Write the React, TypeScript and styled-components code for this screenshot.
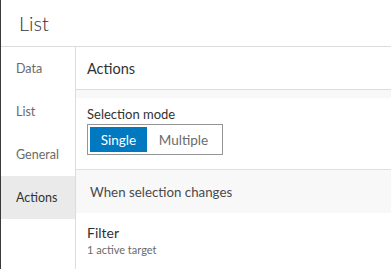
import React, { useState } from 'react';
import styled, { createGlobalStyle } from 'styled-components';

const Global = createGlobalStyle`
  html,body{margin:0;padding:0;background:#fff;}
  body{font-family:Lato,"Noto Sans",sans-serif;color:#323232;}
`;

/* ── Styles ── */
const Panel = styled.div`
  width:391px;height:269px;overflow:hidden;background:#fff;
  display:flex;flex-direction:column;border-left:1px solid #3a3a3a;box-sizing:border-box;
`;
const Header = styled.div`
  height:46px;flex:none;display:flex;align-items:center;padding-left:18px;
  border-bottom:1px solid #dcdcdc;font-size:20px;font-weight:300;color:#323232;
  box-sizing:content-box;
`;
const Body = styled.div`flex:1;display:flex;min-height:0;`;

const Side = styled.nav`width:74px;flex:none;border-right:1px solid #dcdcdc;display:flex;flex-direction:column;`;
const SideItem = styled.div<{ $active?: boolean }>`
  height:43px;display:flex;align-items:center;
  font-size:12.5px;color:${p => (p.$active ? '#323232' : '#6a6a6a')};
  background:${p => (p.$active ? '#eaeaea' : 'transparent')};
  margin-left:${p => (p.$active ? '-1px' : '0')};
  padding-left:${p => (p.$active ? '16px' : '15px')};
  cursor:pointer;
`;

const Main = styled.div`flex:1;display:flex;flex-direction:column;min-width:0;`;
const MainTitle = styled.div`
  height:42px;flex:none;display:flex;align-items:center;padding-left:11px;
  font-size:14.5px;color:#323232;border-bottom:1px solid #dcdcdc;
`;
const Gap = styled.div`height:8px;flex:none;background:#f8f8f8;`;

const Section = styled.div`
  padding:9px 11px 0;height:72px;box-sizing:border-box;flex:none;
  border-bottom:1px solid #e0e0e0;
`;
const FieldLabel = styled.div`font-size:13px;color:#323232;line-height:15px;margin-bottom:2px;`;

const Segmented = styled.div`
  display:inline-flex;border:1px solid #959595;padding:2px;
`;
const SegBtn = styled.button<{ $on?: boolean; $w: number }>`
  height:25px;width:${p => p.$w}px;border:none;padding:0;
  font-family:inherit;font-size:13.5px;cursor:pointer;
  background:${p => (p.$on ? '#0079c1' : '#fff')};
  color:${p => (p.$on ? '#fff' : '#6a6a6a')};
`;

const GroupBar = styled.div`
  height:43px;flex:none;background:#f8f8f8;display:flex;align-items:center;
  padding-left:14px;font-size:13.3px;color:#4a4a4a;
`;

const ActionRow = styled.div`padding:11px 11px;display:flex;flex-direction:column;gap:2px;`;
const ActionName = styled.div`font-size:14px;color:#323232;line-height:17px;`;
const ActionSub = styled.div`font-size:11px;color:#6a6a6a;line-height:14px;`;

const tabs = ['Data', 'List', 'General', 'Actions'];

const App: React.FC = () => {
  const [tab, setTab] = useState('Actions');
  const [mode, setMode] = useState<'single' | 'multiple'>('single');

  return (
    <Panel>
      <Global />
      <Header>List</Header>
      <Body>
        <Side>
          {tabs.map(t => (
            <SideItem key={t} $active={tab === t} onClick={() => setTab(t)}>{t}</SideItem>
          ))}
        </Side>
        <Main>
          <MainTitle>Actions</MainTitle>
          <Gap />
          <Section>
            <FieldLabel>Selection mode</FieldLabel>
            <Segmented>
              <SegBtn $w={57} $on={mode === 'single'} onClick={() => setMode('single')}>Single</SegBtn>
              <SegBtn $w={73} $on={mode === 'multiple'} onClick={() => setMode('multiple')}>Multiple</SegBtn>
            </Segmented>
          </Section>
          <GroupBar>When selection changes</GroupBar>
          <ActionRow>
            <ActionName>Filter</ActionName>
            <ActionSub>1 active target</ActionSub>
          </ActionRow>
        </Main>
      </Body>
    </Panel>
  );
};

export default App;
